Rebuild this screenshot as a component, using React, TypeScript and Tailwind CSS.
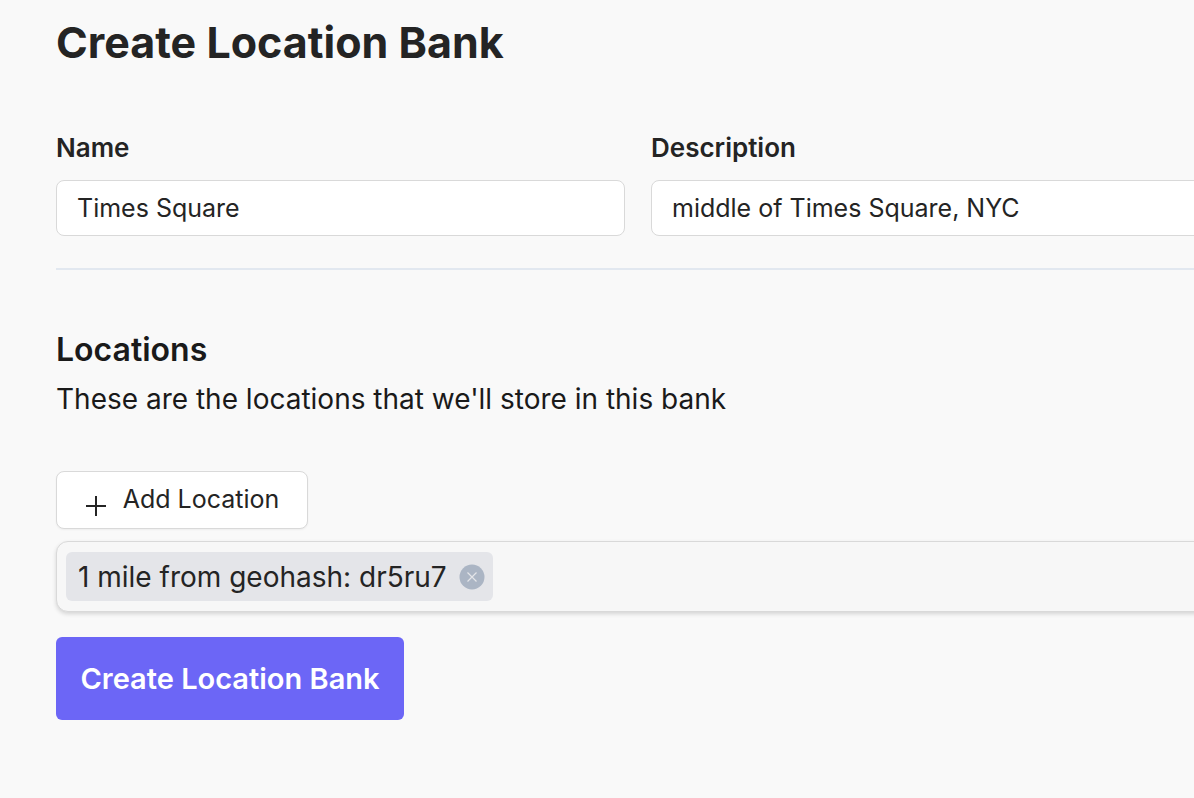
import React, { useState } from "react";

type FieldProps = {
  id: string;
  label: string;
  value: string;
  onChange: (value: string) => void;
};

function Field({ id, label, value, onChange }: FieldProps) {
  return (
    <div className="flex min-w-0 flex-col gap-4">
      <label htmlFor={id} className="text-[26px] leading-8 font-semibold">
        {label}
      </label>
      <input
        id={id}
        type="text"
        value={value}
        onChange={(e) => onChange(e.target.value)}
        className="h-14 w-full rounded-lg border border-[#d9d9d9] bg-white px-5 text-[25px] outline-none focus:border-[#6c66f6]"
      />
    </div>
  );
}

function PlusIcon() {
  return (
    <svg viewBox="0 0 22 22" className="mt-3 size-[22px]" fill="none" stroke="currentColor" strokeWidth="2" aria-hidden="true">
      <path d="M11 1v20M1 11h20" />
    </svg>
  );
}

function RemoveIcon() {
  return (
    <svg viewBox="0 0 26 26" className="size-[26px]" fill="none" aria-hidden="true">
      <circle cx="13" cy="13" r="12.5" fill="#abb5c4" />
      <path d="M8.5 8.5l9 9M17.5 8.5l-9 9" stroke="#e4e5e9" strokeWidth="1.2" />
    </svg>
  );
}

export default function App() {
  const [name, setName] = useState("Times Square");
  const [description, setDescription] = useState("middle of Times Square, NYC");
  const [locations, setLocations] = useState(["1 mile from geohash: dr5ru7"]);

  const removeLocation = (location: string) => {
    setLocations(locations.filter((l) => l !== location));
  };

  return (
    <main className="min-h-screen overflow-hidden bg-[#f9f9f9] pt-4 pl-14 font-['Inter',sans-serif] text-[#242424]">
      {/* The form bleeds past the right edge */}
      <form className="-mr-[26px] flex flex-col items-start" onSubmit={(e) => e.preventDefault()}>
        <h1 className="text-[43px] leading-[52px] font-bold">Create Location Bank</h1>

        <div className="mt-16 grid w-full grid-cols-2 gap-[26px]">
          <Field id="name" label="Name" value={name} onChange={setName} />
          <Field id="description" label="Description" value={description} onChange={setDescription} />
        </div>

        <hr className="mt-8 w-full border-t-2 border-[#e2e8f0]" />

        <h2 className="mt-15 text-[32px] leading-10 font-semibold text-[#1a1a1a]">Locations</h2>
        <p className="mt-[9px] text-[28px] leading-10 text-[#1a1a1a]">
          These are the locations that we'll store in this bank
        </p>

        <button
          type="button"
          className="mt-13 flex h-[58px] w-[252px] items-center justify-center gap-4 rounded-lg border border-[#d9d9d9] bg-white text-[25px] shadow-xs"
        >
          <PlusIcon />
          Add Location
        </button>

        <div className="mt-3 flex w-full flex-wrap gap-2 rounded-xl border border-[#d9d9d9] bg-[#f7f7f7] px-[9px] py-[10px] shadow-[0_2px_4px_rgba(0,0,0,0.15)]">
          {locations.map((location) => (
            <span key={location} className="flex h-[49px] items-center gap-3 rounded-md bg-[#e4e5e9] pr-2 pl-3 text-[28px]">
              {location}
              <button type="button" aria-label={`Remove ${location}`} onClick={() => removeLocation(location)}>
                <RemoveIcon />
              </button>
            </span>
          ))}
        </div>

        <button
          type="submit"
          className="mt-[25px] h-[83px] w-[348px] rounded-md bg-[#6c66f6] text-[29px] font-semibold text-white"
        >
          Create Location Bank
        </button>
      </form>
    </main>
  );
}
